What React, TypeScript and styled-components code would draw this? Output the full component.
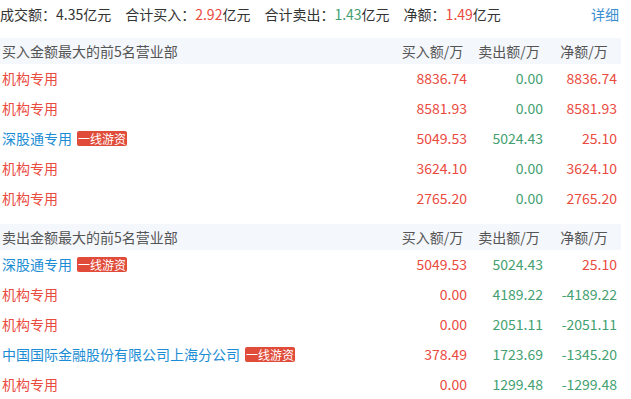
import React from "react";
import styled, { createGlobalStyle } from "styled-components";

const GlobalStyle = createGlobalStyle`
  html, body { margin: 0; padding: 0; background: #fff; }
  * { box-sizing: border-box; }
  body { font-family: "Noto Sans CJK SC", "Noto Sans", sans-serif; font-size: 14px; color: #333; }
`;

const RED = "#ea4b3f";
const GREEN = "#449f71";
const BLUE = "#1c8dd4";

type Tone = "red" | "green" | "dark";
const toneColor = (t: Tone) => (t === "red" ? RED : t === "green" ? GREEN : "#333");

const Page = styled.div`
  width: 631px;
  padding-right: 10px;
`;

const Summary = styled.div`
  display: flex;
  align-items: center;
  height: 28px;
  line-height: 28px;
  margin-bottom: 10px;
  gap: 14px;
  white-space: nowrap;
`;

const SummaryItem = styled.span`
  color: #333;
`;

const Value = styled.span<{ $tone: Tone }>`
  color: ${(p) => toneColor(p.$tone)};
`;

const Detail = styled.a`
  margin-left: auto;
  margin-right: 2px;
  color: #3a8ed0;
  text-decoration: none;
  cursor: pointer;
`;

const Section = styled.div<{ $gap?: boolean }>`
  margin-top: ${(p) => (p.$gap ? "10px" : "0")};
`;

const Grid = styled.div`
  display: grid;
  grid-template-columns: 1fr 77px 76px 74px;
  align-items: center;
`;

const HeadRow = styled(Grid)`
  height: 26px;
  padding-bottom: 1px;
  background: #f4f7fb;
  color: #555;
`;

const HeadTitle = styled.div`
  padding-left: 2px;
`;

const HeadCell = styled.div`
  text-align: center;
`;

const Row = styled(Grid)`
  height: 30px;
  padding-bottom: 2px;
`;

const Name = styled.div<{ $kind: "inst" | "broker" }>`
  padding-left: 2px;
  color: ${(p) => (p.$kind === "inst" ? RED : BLUE)};
  display: flex;
  align-items: center;
  white-space: nowrap;
`;

const Badge = styled.span`
  display: inline-block;
  margin-left: 5px;
  padding: 0 1px;
  height: 15px;
  line-height: 15px;
  font-size: 12px;
  color: #fff;
  background: #e04b3a;
  border-radius: 2px;
`;

const Num = styled.div<{ $tone: Tone }>`
  text-align: right;
  padding-right: 4px;
  color: ${(p) => toneColor(p.$tone)};
`;

type Item = { name: string; badge?: boolean; buy: string; sell: string; net: string };

const buyList: Item[] = [
  { name: "机构专用", buy: "8836.74", sell: "0.00", net: "8836.74" },
  { name: "机构专用", buy: "8581.93", sell: "0.00", net: "8581.93" },
  { name: "深股通专用", badge: true, buy: "5049.53", sell: "5024.43", net: "25.10" },
  { name: "机构专用", buy: "3624.10", sell: "0.00", net: "3624.10" },
  { name: "机构专用", buy: "2765.20", sell: "0.00", net: "2765.20" },
];

const sellList: Item[] = [
  { name: "深股通专用", badge: true, buy: "5049.53", sell: "5024.43", net: "25.10" },
  { name: "机构专用", buy: "0.00", sell: "4189.22", net: "-4189.22" },
  { name: "机构专用", buy: "0.00", sell: "2051.11", net: "-2051.11" },
  { name: "中国国际金融股份有限公司上海分公司", badge: true, buy: "378.49", sell: "1723.69", net: "-1345.20" },
  { name: "机构专用", buy: "0.00", sell: "1299.48", net: "-1299.48" },
];

const Table: React.FC<{ title: string; items: Item[]; gap?: boolean }> = ({ title, items, gap }) => (
  <Section $gap={gap}>
    <HeadRow>
      <HeadTitle>{title}</HeadTitle>
      <HeadCell>买入额/万</HeadCell>
      <HeadCell>卖出额/万</HeadCell>
      <HeadCell>净额/万</HeadCell>
    </HeadRow>
    {items.map((it, i) => (
      <Row key={i}>
        <Name $kind={it.name === "机构专用" ? "inst" : "broker"}>
          {it.name}
          {it.badge && <Badge>一线游资</Badge>}
        </Name>
        <Num $tone="red">{it.buy}</Num>
        <Num $tone="green">{it.sell}</Num>
        <Num $tone={it.net.startsWith("-") ? "green" : "red"}>{it.net}</Num>
      </Row>
    ))}
  </Section>
);

export default function App() {
  return (
    <>
      <GlobalStyle />
      <Page>
        <Summary>
          <SummaryItem>
            成交额：<Value $tone="dark">4.35</Value>亿元
          </SummaryItem>
          <SummaryItem>
            合计买入：<Value $tone="red">2.92</Value>亿元
          </SummaryItem>
          <SummaryItem>
            合计卖出：<Value $tone="green">1.43</Value>亿元
          </SummaryItem>
          <SummaryItem>
            净额：<Value $tone="red">1.49</Value>亿元
          </SummaryItem>
          <Detail>详细</Detail>
        </Summary>
        <Table title="买入金额最大的前5名营业部" items={buyList} />
        <Table title="卖出金额最大的前5名营业部" items={sellList} gap />
      </Page>
    </>
  );
}
